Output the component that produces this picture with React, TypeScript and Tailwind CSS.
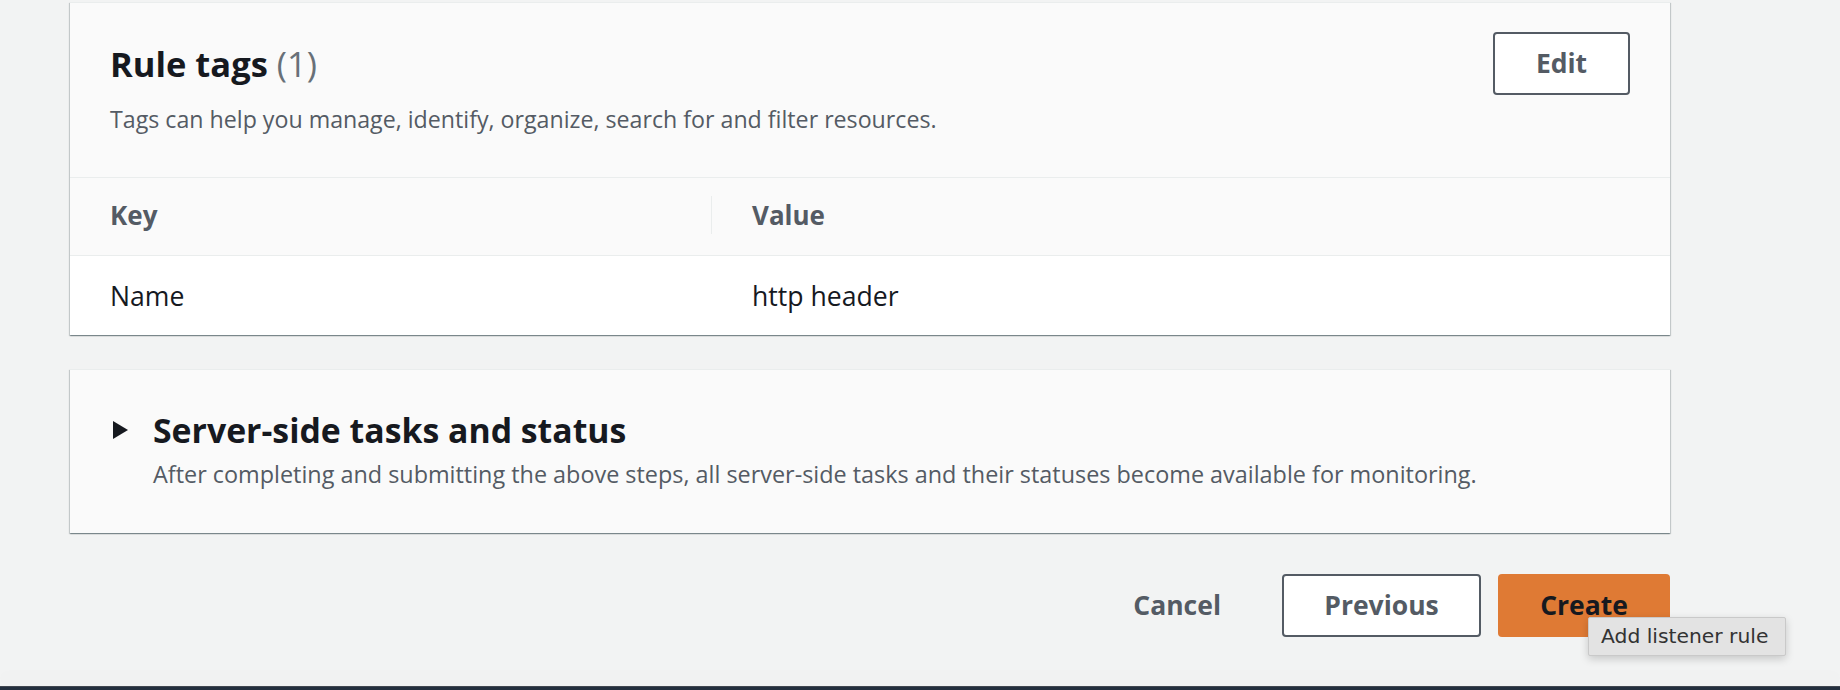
import React from 'react';

const cardShadow =
  'shadow-[0_1px_1px_0_rgba(0,28,36,0.3),1px_1px_1px_0_rgba(0,28,36,0.15),-1px_1px_1px_0_rgba(0,28,36,0.15)]';

const App: React.FC = () => {
  const tags = [{ key: 'Name', value: 'http header' }];

  return (
    <div
      className="flex h-[690px] w-full flex-col bg-[#f2f3f3] text-[#16191f]"
      style={{ fontFamily: '"Open Sans", "Noto Sans", sans-serif' }}
    >
      <div className="flex-1 pl-[70px] pt-[2px]">
        <div className="w-[1600px]">
          {/* Rule tags card */}
          <div className={`border-t border-[#eaeded] bg-white ${cardShadow}`}>
            <div className="bg-[#fafafa] px-[40px] pt-[29px] pb-[42px]">
              <div className="flex items-center justify-between">
                <h2 className="text-[34.5px] font-bold leading-[40px]">
                  Rule tags <span className="font-normal text-[#687078]">(1)</span>
                </h2>
                <button className="h-[63px] w-[137px] rounded-[4px] border-2 border-[#545b64] bg-white text-[26.5px] font-bold text-[#545b64]">
                  Edit
                </button>
              </div>
              <p className="mt-[8px] text-[23.2px] leading-[32px] text-[#545b64]">
                Tags can help you manage, identify, organize, search for and filter resources.
              </p>
            </div>

            <div className="flex border-y border-[#eaeded] bg-[#fafafa] pt-[18px] pb-[21px] text-[26px] font-bold leading-[38px] text-[#545b64]">
              <div className="w-[641px] pl-[40px]">Key</div>
              <div className="flex-1 border-l border-[#eaeded] pl-[40px]">Value</div>
            </div>

            {tags.map((tag) => (
              <div key={tag.key} className="flex pt-[22px] pb-[21px] text-[26.6px] leading-[36px]">
                <div className="w-[641px] pl-[40px]">{tag.key}</div>
                <div className="flex-1 pl-[41px]">{tag.value}</div>
              </div>
            ))}
          </div>

          {/* Server-side tasks */}
          <div className={`mt-[34px] border-t border-[#eaeded] bg-[#fafafa] pl-[40px] pt-[40px] pb-[43px] ${cardShadow}`}>
            <div className="flex items-center">
              <svg width="20" height="20" viewBox="0 0 20 20" className="shrink-0">
                <polygon points="3,1 18,10 3,19" fill="#16191f" />
              </svg>
              <h2 className="ml-[23px] text-[33.8px] font-bold leading-[40px]">Server-side tasks and status</h2>
            </div>
            <p className="mt-[8px] pl-[43px] text-[23.4px] leading-[32px] text-[#545b64]">
              After completing and submitting the above steps, all server-side tasks and their statuses become
              available for monitoring.
            </p>
          </div>

          {/* Actions */}
          <div className="mt-[41px] flex items-center justify-end gap-[17px]">
            <button className="h-[63px] px-[44px] text-[26.5px] font-bold text-[#545b64]">Cancel</button>
            <button className="h-[63px] w-[199px] rounded-[4px] border-2 border-[#545b64] bg-white text-[26.5px] font-bold text-[#545b64]">
              Previous
            </button>
            <div className="relative">
              <button className="h-[63px] w-[172px] rounded-[4px] bg-[#df7a34] text-[26.5px] font-bold text-[#16191f]">
                Create
              </button>
              <div
                className="absolute left-[90px] top-[43px] whitespace-nowrap rounded-[2px] border border-[#c9c9c9] bg-[#e3e3e3] pl-[12px] pr-[17px] pt-[6px] pb-[7px] text-[20.3px] leading-[24px] text-[#333333] shadow-[0_3px_8px_rgba(0,0,0,0.18)]"
                style={{ fontFamily: '"DejaVu Sans", sans-serif' }}
              >
                Add listener rule
              </div>
            </div>
          </div>
        </div>
      </div>

      <div className="h-[4px] border-t border-[#414750] bg-[#232f3e] shadow-[0_-10px_14px_rgba(0,0,0,0.03)]" />
    </div>
  );
};

export default App;
